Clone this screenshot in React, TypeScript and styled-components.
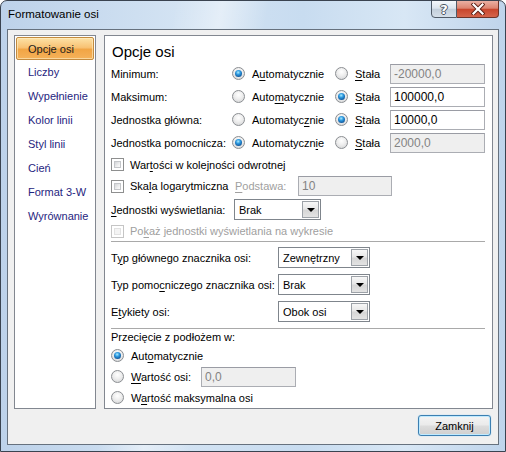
import React from 'react';
import styled, {createGlobalStyle, css} from 'styled-components';

const GlobalStyle = createGlobalStyle`
    body {
        margin: 0;
        background: #ffffff;
        font-family: 'Liberation Sans', Arial, sans-serif;
        font-size: 11px;
        color: #000;
    }
    * {
        box-sizing: border-box;
    }
`;

const Window = styled.div`
    width: 506px;
    height: 452px;
    border: 1px solid #3a4350;
    border-radius: 7px 7px 0 0;
    padding: 0 6px 6px 6px;
    display: flex;
    flex-direction: column;
    background:
        linear-gradient(100deg, rgba(255, 255, 255, 0) 30%, rgba(255, 255, 255, 0.45) 38%, rgba(255, 255, 255, 0) 46%),
        linear-gradient(to right, #bdd2ea, #d3e3f3 35%, #c8dcf0 60%, #d8e7f5 80%, #bfd4eb);
    overflow: hidden;
`;

const TitleBar = styled.div`
    height: 28px;
    display: flex;
    align-items: flex-start;
`;

const Title = styled.span`
    margin: 5px 0 0 1px;
    line-height: 17px;
    font-size: 11.5px;
    color: #000;
`;

const Controls = styled.div`
    margin: -1px 0 0 auto;
    display: flex;
`;

const CaptionButton = styled.div<{close?: boolean}>`
    height: 18px;
    display: flex;
    align-items: center;
    justify-content: center;
    border: 1px solid #505b68;
    ${props =>
        props.close
            ? css`
                  width: 42px;
                  border-color: #6e3328;
                  border-left: none;
                  border-radius: 0 0 4px 0;
                  background: linear-gradient(#eab0a3, #dc8470 45%, #c8462d 52%, #d5644b);
              `
            : css`
                  width: 26px;
                  border-radius: 0 0 0 4px;
                  background: linear-gradient(#f5f8fb, #dce5ee 45%, #c3cfdb 52%, #d5dfe9);
              `}
`;

const HelpGlyph = styled.span`
    font-family: 'DejaVu Sans', sans-serif;
    font-weight: bold;
    font-size: 13px;
    line-height: 13px;
    color: #ffffff;
    text-shadow: -1px 0 #4a5562, 1px 0 #4a5562, 0 -1px #4a5562, 0 1px #4a5562;
`;

const Client = styled.div`
    flex: 1;
    border: 1px solid #66717e;
    background: #f0f0f0;
    display: flex;
    flex-direction: column;
`;

const Body = styled.div`
    display: flex;
    gap: 8px;
    padding: 5px 5px 0 6px;
`;

const Nav = styled.div`
    width: 82px;
    height: 374px;
    background: #ffffff;
    border: 1px solid #828790;
    display: flex;
    flex-direction: column;
`;

const NavItem = styled.div<{active?: boolean}>`
    height: 24px;
    margin: 0 1px;
    padding-left: 11px;
    display: flex;
    align-items: center;
    border: 1px solid transparent;
    color: #1f2580;
    white-space: nowrap;
    ${props =>
        props.active &&
        css`
            margin-top: 1px;
            height: 23px;
            color: #1c1c1c;
            border-color: #c48b3e;
            border-radius: 2px;
            background: linear-gradient(#fde2a6, #f8c274 45%, #f1a545 55%, #f5b25a);
            box-shadow: inset 0 0 0 1px rgba(255, 240, 200, 0.6);
        `}
`;

const Panel = styled.div`
    flex: 1;
    height: 374px;
    background: #ffffff;
    border: 1px solid #828790;
    padding: 6px 7px 0 6px;
    display: flex;
    flex-direction: column;
`;

const Heading = styled.div`
    font-size: 15px;
    line-height: 20px;
    height: 20px;
    padding-left: 1px;
`;

const AxisGrid = styled.div`
    display: grid;
    grid-template-columns: 121px 103px 55px 95px;
    grid-auto-rows: 23px;
    align-items: center;
`;

const Label = styled.span<{disabled?: boolean}>`
    white-space: nowrap;
    color: ${props => (props.disabled ? '#a0a0a0' : '#000')};
`;

const Choice = styled.label`
    display: flex;
    align-items: center;
    gap: 7px;
    white-space: nowrap;
`;

const Radio = styled.span<{checked?: boolean}>`
    position: relative;
    flex: none;
    width: 13px;
    height: 13px;
    border-radius: 50%;
    border: 1px solid #8b8e92;
    background: radial-gradient(circle at 50% 35%, #ffffff 0, #eeeeee 45%, #cfd0d2 100%);
    ${props =>
        props.checked &&
        css`
            &::after {
                content: '';
                position: absolute;
                inset: 2px;
                border-radius: 50%;
                background: radial-gradient(circle at 45% 35%, #a9ecff 0, #2f9ae0 35%, #0c4f93 80%, #08325f 100%);
            }
        `}
`;

const Check = styled.span<{disabled?: boolean}>`
    position: relative;
    flex: none;
    width: 13px;
    height: 13px;
    border: 1px solid ${props => (props.disabled ? '#c5c5c5' : '#8e8f8f')};
    background: #ffffff;
    &::after {
        content: '';
        position: absolute;
        inset: 2px;
        border: 1px solid ${props => (props.disabled ? '#e2e2e2' : '#c4c6c9')};
        background: ${props =>
            props.disabled ? '#f4f4f4' : 'linear-gradient(135deg, #d3d5d8, #f3f3f3 70%, #fafafa)'};
    }
`;

const CheckChoice = styled.label<{disabled?: boolean}>`
    display: flex;
    align-items: center;
    gap: 6px;
    white-space: nowrap;
    color: ${props => (props.disabled ? '#a0a0a0' : '#000')};
`;

const Field = styled.div<{disabled?: boolean; width: number}>`
    width: ${props => props.width}px;
    height: 20px;
    padding-left: 3px;
    display: flex;
    align-items: center;
    border: 1px solid #abadb3;
    border-top-color: #9a9ca4;
    background: ${props => (props.disabled ? '#efefef' : '#ffffff')};
    color: ${props => (props.disabled ? '#838383' : '#000')};
    font-size: 12px;
    white-space: nowrap;
`;

const Select = styled.div<{width: number}>`
    width: ${props => props.width}px;
    height: 21px;
    display: flex;
    border: 1px solid #7f858c;
    background: #ffffff;
`;

const SelectText = styled.span`
    flex: 1;
    padding-left: 4px;
    display: flex;
    align-items: center;
    white-space: nowrap;
`;

const SelectButton = styled.span`
    width: 17px;
    margin: 1px;
    display: flex;
    align-items: center;
    justify-content: center;
    border: 1px solid #9da2a8;
    background: linear-gradient(#f7f7f7, #e8e8e8 45%, #d6d6d6 55%, #e3e3e3);
`;

const Arrow = styled.span`
    width: 0;
    height: 0;
    border-left: 4px solid transparent;
    border-right: 4px solid transparent;
    border-top: 4px solid #000;
`;

const Row = styled.div<{h: number; cols?: string}>`
    height: ${props => props.h}px;
    display: ${props => (props.cols ? 'grid' : 'flex')};
    grid-template-columns: ${props => props.cols ?? 'none'};
    align-items: center;
`;

const Separator = styled.div<{top: number; bottom: number}>`
    height: 1px;
    background: #a9a9a9;
    margin: ${props => props.top}px 0 ${props => props.bottom}px 0;
`;

const Footer = styled.div`
    flex: 1;
    display: flex;
    justify-content: flex-end;
    align-items: flex-start;
    padding: 6px 7px 0 0;
`;

const Button = styled.button`
    width: 73px;
    height: 21px;
    padding: 0;
    font: inherit;
    color: #000;
    border: 1px solid #3c7fb1;
    border-radius: 3px;
    background: linear-gradient(#f4f4f4, #ebebeb 45%, #dcdcdc 55%, #cfcfcf);
    box-shadow: inset 0 0 0 1px #bfeaff, 0 0 1px #67c3ff;
`;

const Key = styled.span`
    text-decoration: underline;
    text-underline-offset: 2px;
`;

const SelectBox = ({value, width}: {value: string; width: number}) => (
    <Select width={width}>
        <SelectText>{value}</SelectText>
        <SelectButton>
            <Arrow />
        </SelectButton>
    </Select>
);

const navItems = ['Opcje osi', 'Liczby', 'Wypełnienie', 'Kolor linii', 'Styl linii', 'Cień', 'Format 3-W', 'Wyrównanie'];

const axisRows = [
    {label: 'Minimum:', auto: true, value: '-20000,0', autoText: <>A<Key>u</Key>tomatycznie</>},
    {label: 'Maksimum:', auto: false, value: '100000,0', autoText: <>Auto<Key>m</Key>atycznie</>},
    {label: 'Jednostka główna:', auto: false, value: '10000,0', autoText: <>Automatyc<Key>z</Key>nie</>},
    {label: 'Jednostka pomocnicza:', auto: true, value: '2000,0', autoText: <>Automatyczn<Key>i</Key>e</>},
];

const markRows = [
    {label: <>T<Key>y</Key>p głównego znacznika osi:</>, value: 'Zewnętrzny'},
    {label: <>Typ pomo<Key>c</Key>niczego znacznika osi:</>, value: 'Brak'},
    {label: <>E<Key>t</Key>ykiety osi:</>, value: 'Obok osi'},
];

export default function App() {
    return (
        <>
            <GlobalStyle />
            <Window>
                <TitleBar>
                    <Title>Formatowanie osi</Title>
                    <Controls>
                        <CaptionButton>
                            <HelpGlyph>?</HelpGlyph>
                        </CaptionButton>
                        <CaptionButton close>
                            <svg width="14" height="12" viewBox="0 0 14 12">
                                <path d="M2.5 1.5 L11.5 10.5 M11.5 1.5 L2.5 10.5" stroke="#5a1e14" strokeWidth="4" strokeLinecap="square" />
                                <path d="M2.5 1.5 L11.5 10.5 M11.5 1.5 L2.5 10.5" stroke="#ffffff" strokeWidth="2.2" strokeLinecap="square" />
                            </svg>
                        </CaptionButton>
                    </Controls>
                </TitleBar>
                <Client>
                    <Body>
                        <Nav>
                            {navItems.map((item, i) => (
                                <NavItem key={item} active={i === 0}>
                                    {item}
                                </NavItem>
                            ))}
                        </Nav>
                        <Panel>
                            <Heading>Opcje osi</Heading>
                            <AxisGrid>
                                {axisRows.map(row => (
                                    <React.Fragment key={row.label}>
                                        <Label>{row.label}</Label>
                                        <Choice>
                                            <Radio checked={row.auto} />
                                            <span>{row.autoText}</span>
                                        </Choice>
                                        <Choice>
                                            <Radio checked={!row.auto} />
                                            <span>
                                                <Key>S</Key>tała
                                            </span>
                                        </Choice>
                                        <Field width={95} disabled={row.auto}>
                                            {row.value}
                                        </Field>
                                    </React.Fragment>
                                ))}
                            </AxisGrid>
                            <Row h={21}>
                                <CheckChoice>
                                    <Check />
                                    <span>
                                        War<Key>t</Key>ości w kolejności odwrotnej
                                    </span>
                                </CheckChoice>
                            </Row>
                            <Row h={22} cols="124px 63px 94px">
                                <CheckChoice>
                                    <Check />
                                    <span>
                                        Ska<Key>l</Key>a logarytmiczna
                                    </span>
                                </CheckChoice>
                                <Label disabled>
                                    <Key>P</Key>odstawa:
                                </Label>
                                <Field width={94} disabled>
                                    10
                                </Field>
                            </Row>
                            <Row h={25} cols="123px 87px">
                                <Label>
                                    <Key>J</Key>ednostki wyświetlania:
                                </Label>
                                <SelectBox value="Brak" width={87} />
                            </Row>
                            <Row h={18}>
                                <CheckChoice disabled>
                                    <Check disabled />
                                    <span>
                                        Po<Key>k</Key>aż jednostki wyświetlania na wykresie
                                    </span>
                                </CheckChoice>
                            </Row>
                            <Separator top={1} bottom={2} />
                            {markRows.map((row, i) => (
                                <Row key={i} h={27} cols="167px 92px">
                                    <Label>{row.label}</Label>
                                    <SelectBox value={row.value} width={92} />
                                </Row>
                            ))}
                            <Separator top={3} bottom={0} />
                            <Row h={16}>
                                <Label>Przecięcie z podłożem w:</Label>
                            </Row>
                            <Row h={21}>
                                <Choice>
                                    <Radio checked />
                                    <span>
                                        Aut<Key>o</Key>matycznie
                                    </span>
                                </Choice>
                            </Row>
                            <Row h={21} cols="90px 95px">
                                <Choice>
                                    <Radio />
                                    <span>
                                        <Key>W</Key>artość osi:
                                    </span>
                                </Choice>
                                <Field width={95} disabled>
                                    0,0
                                </Field>
                            </Row>
                            <Row h={21}>
                                <Choice>
                                    <Radio />
                                    <span>
                                        W<Key>a</Key>rtość maksymalna osi
                                    </span>
                                </Choice>
                            </Row>
                        </Panel>
                    </Body>
                    <Footer>
                        <Button>Zamknij</Button>
                    </Footer>
                </Client>
            </Window>
        </>
    );
}
